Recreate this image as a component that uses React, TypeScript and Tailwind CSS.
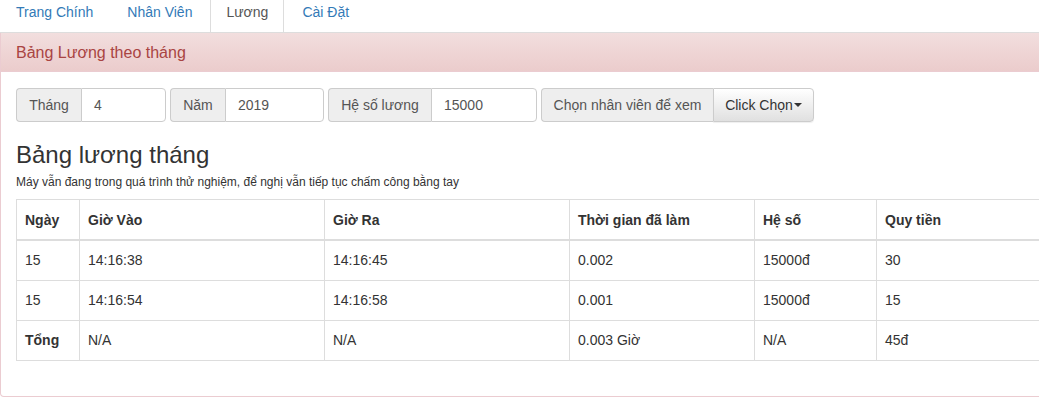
import React from "react";

const rows = [
  { d: "15", vao: "14:16:38", ra: "14:16:45", tg: "0.002", hs: "15000đ", qt: "30" },
  { d: "15", vao: "14:16:54", ra: "14:16:58", tg: "0.001", hs: "15000đ", qt: "15" },
];

function Group({ label, value, addonW, inputW }: { label: string; value: string; addonW: string; inputW: string }) {
  return (
    <div className="flex h-[34px]">
      <span className={`flex items-center justify-center bg-[#eee] border border-r-0 border-[#ccc] rounded-l-[4px] text-[14px] text-[#555] whitespace-nowrap ${addonW}`}>
        {label}
      </span>
      <span className={`flex items-center px-[12px] bg-white border border-[#ccc] rounded-r-[4px] text-[14px] text-[#555] ${inputW}`}>
        {value}
      </span>
    </div>
  );
}

export default function App() {
  return (
    <div
      className="w-[1039px] h-[402px] overflow-hidden bg-white text-[#333] text-[14px]"
      style={{ fontFamily: '"Liberation Sans", Arial, sans-serif' }}
    >
      <div className="w-[1092px]">
        {/* Tabs */}
        <ul className="flex h-[33px] border-b border-[#ddd] overflow-hidden">
          {[
            { t: "Trang Chính", a: false },
            { t: "Nhân Viên", a: false },
            { t: "Lương", a: true },
            { t: "Cài Đặt", a: false },
          ].map((tab) => (
            <li key={tab.t} className="mr-[2px] -mt-[9px]">
              <span
                className={`block px-[15px] pt-[10px] pb-[10px] leading-5 border rounded-t-[4px] ${
                  tab.a ? "bg-white border-[#ddd] text-[#555]" : "border-transparent text-[#337ab7]"
                }`}
              >
                {tab.t}
              </span>
            </li>
          ))}
        </ul>

        {/* Panel */}
        <div className="border border-t-0 border-[#ebccd1] rounded-b-[4px]">
          <div className="px-[15px] pt-[11px] pb-[9px] leading-[18px] text-[16px] text-[#a94442] border-b border-[#ebccd1] bg-gradient-to-b from-[#f2dede] to-[#ebcccc]">
            Bảng Lương theo tháng
          </div>
          <div className="px-[15px] pt-[15px] pb-[15px]">
            <div className="flex gap-[4px] pt-[1px]">
              <Group label="Tháng" value="4" addonW="w-[65px]" inputW="w-[85px]" />
              <Group label="Năm" value="2019" addonW="w-[55px]" inputW="w-[99px]" />
              <Group label="Hệ số lương" value="15000" addonW="w-[103px]" inputW="w-[106px]" />
              <div className="flex h-[34px]">
                <span className="flex items-center justify-center w-[172px] bg-[#eee] border border-r-0 border-[#ccc] rounded-l-[4px] text-[14px] text-[#555] whitespace-nowrap">
                  Chọn nhân viên để xem
                </span>
                <span className="flex items-center justify-center w-[101px] border border-[#ccc] rounded-r-[4px] text-[14px] text-[#333] bg-gradient-to-b from-white to-[#e0e0e0] shadow-[0_1px_0_rgba(255,255,255,0.15),0_1px_1px_rgba(0,0,0,0.075)] whitespace-nowrap">
                  Click Chọn
                  <span className="inline-block w-0 h-0 ml-[1px] border-t-[4px] border-t-[#333] border-x-[4px] border-x-transparent" />
                </span>
              </div>
            </div>

            <h3 className="mt-[20px] mb-[6px] text-[24px] leading-[26px] font-medium text-[#333]">
              Bảng lương tháng
            </h3>
            <p className="text-[12px] leading-[17px] text-[#333]">
              Máy vẫn đang trong quá trình thử nghiệm, để nghị vẫn tiếp tục chấm công bằng tay
            </p>

            <table className="mt-[8px] mb-[20px] w-[1060px] table-fixed border-collapse border border-[#ddd]">
              <colgroup>
                <col className="w-[63px]" />
                <col className="w-[245px]" />
                <col className="w-[245px]" />
                <col className="w-[185px]" />
                <col className="w-[122px]" />
                <col />
              </colgroup>
              <thead>
                <tr>
                  {["Ngày", "Giờ Vào", "Giờ Ra", "Thời gian đã làm", "Hệ số", "Quy tiền"].map((h) => (
                    <th
                      key={h}
                      className="text-left font-bold px-[8px] pt-[10px] pb-[9px] leading-5 border border-[#ddd] border-b-2"
                    >
                      {h}
                    </th>
                  ))}
                </tr>
              </thead>
              <tbody>
                {rows.map((r, i) => (
                  <tr key={i}>
                    {[r.d, r.vao, r.ra, r.tg, r.hs, r.qt].map((c, j) => (
                      <td key={j} className="px-[8px] pt-[9px] pb-[10px] leading-5 border border-[#ddd]">
                        {c}
                      </td>
                    ))}
                  </tr>
                ))}
                <tr>
                  <td className="px-[8px] pt-[9px] pb-[10px] leading-5 border border-[#ddd] font-bold">Tổng</td>
                  {["N/A", "N/A", "0.003 Giờ", "N/A", "45đ"].map((c, j) => (
                    <td key={j} className="px-[8px] pt-[9px] pb-[10px] leading-5 border border-[#ddd]">
                      {c}
                    </td>
                  ))}
                </tr>
              </tbody>
            </table>
          </div>
        </div>
      </div>
    </div>
  );
}
